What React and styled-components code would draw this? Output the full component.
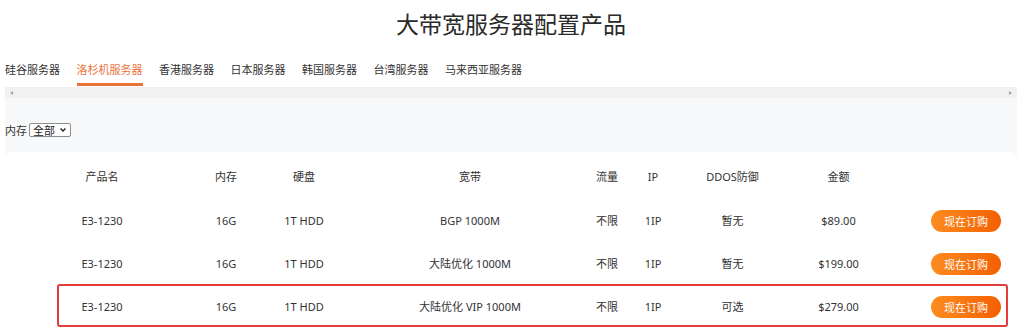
import React from "react";
import styled, { createGlobalStyle } from "styled-components";

const GlobalStyle = createGlobalStyle`
  html, body { margin: 0; padding: 0; background: #ffffff; }
  body {
    font-family: "Noto Sans", "Noto Sans CJK SC", sans-serif;
    color: #333333;
  }
`;

const Page = styled.div`
  padding: 0 7px 0 5px;
  width: 1012px;
`;

const Title = styled.h1`
  margin: 0;
  font-size: 23px;
  font-weight: 400;
  line-height: 46px;
  text-align: center;
  color: #2a2a2a;
  font-family: "Noto Sans CJK SC", sans-serif;
`;

const Tabs = styled.nav`
  display: flex;
  gap: 16.5px;
`;

const Tab = styled.div`
  font-size: 11px;
  line-height: 16px;
  padding: 15px 0 6px;
  border-bottom: 3px solid ${(p) => (p.$active ? "#e8733a" : "transparent")};
  color: ${(p) => (p.$active ? "#e8733a" : "#333333")};
  font-family: "Noto Sans CJK SC", sans-serif;
  white-space: nowrap;
`;

const ScrollTrack = styled.div`
  margin-top: 1px;
  height: 11px;
  background: #f1f1f1;
  display: flex;
  align-items: center;
  justify-content: space-between;
  padding: 0 5px;
`;

const Arrow = styled.span`
  width: 0;
  height: 0;
  border-top: 2.5px solid transparent;
  border-bottom: 2.5px solid transparent;
  ${(p) =>
    p.$dir === "left"
      ? "border-right: 3px solid #a3a3a3;"
      : "border-left: 3px solid #a3a3a3;"}
`;

const Panel = styled.div`
  background: #f7f8fa;
  padding-top: 24px;
  height: 235px;
  box-sizing: border-box;
`;

const Filter = styled.div`
  display: flex;
  align-items: center;
  gap: 2px;
  font-size: 11px;
  line-height: 16px;
  height: 16px;
  font-family: "Noto Sans CJK SC", sans-serif;
`;

const SelectWrap = styled.span`
  position: relative;
  display: inline-flex;
`;

const Select = styled.select`
  appearance: none;
  -webkit-appearance: none;
  font-size: 11px;
  line-height: 12px;
  height: 14px;
  width: 42px;
  padding: 0 0 0 3px;
  margin: 0;
  border: 1px solid #8d8d8d;
  border-radius: 2px;
  background: #fff;
  color: #222;
  font-family: "Noto Sans CJK SC", sans-serif;
  box-sizing: border-box;
`;

const Chevron = styled.svg`
  position: absolute;
  right: 5px;
  top: 5px;
  width: 6px;
  height: 4px;
  pointer-events: none;
`;

const Card = styled.div`
  margin-top: 14px;
  background: #ffffff;
  border-radius: 6px 6px 0 0;
  padding: 0 0 10px 7px;
`;

const Row = styled.div`
  position: relative;
  display: grid;
  grid-template-columns: 180px 68px 88px 244px 30px 62px 97px 115px 1fr;
  align-items: center;
  height: ${(p) => (p.$head ? "47px" : "43px")};
  padding-top: ${(p) => (p.$head ? "3px" : "0")};
  box-sizing: border-box;
  font-size: 11px;
  color: #333333;
  font-family: "Noto Sans", "Noto Sans CJK SC", sans-serif;

  ${(p) =>
    p.$highlight &&
    `
    &::after {
      content: "";
      position: absolute;
      left: 45px;
      right: 9px;
      top: -1px;
      bottom: 1px;
      border: 2px solid #e23c3c;
      border-radius: 3px;
      pointer-events: none;
    }
  `}
`;

const Cell = styled.div`
  text-align: center;
  white-space: nowrap;
  line-height: 16px;
`;

const ActionCell = styled.div`
  padding-left: 35px;
  display: flex;
`;

const BuyButton = styled.button`
  width: 70px;
  height: 22px;
  border: none;
  border-radius: 11px;
  background: linear-gradient(90deg, #fd8c20 0%, #f8740f 55%, #f35f04 100%);
  color: #ffffff;
  font-size: 11px;
  font-family: "Noto Sans CJK SC", sans-serif;
  padding: 0;
  cursor: pointer;
`;

const tabs = [
  "硅谷服务器",
  "洛杉机服务器",
  "香港服务器",
  "日本服务器",
  "韩国服务器",
  "台湾服务器",
  "马来西亚服务器",
];

const headers = ["产品名", "内存", "硬盘", "宽带", "流量", "IP", "DDOS防御", "金额"];

const rows = [
  { name: "E3-1230", mem: "16G", disk: "1T HDD", bw: "BGP 1000M", flow: "不限", ip: "1IP", ddos: "暂无", price: "$89.00" },
  { name: "E3-1230", mem: "16G", disk: "1T HDD", bw: "大陆优化 1000M", flow: "不限", ip: "1IP", ddos: "暂无", price: "$199.00" },
  { name: "E3-1230", mem: "16G", disk: "1T HDD", bw: "大陆优化 VIP 1000M", flow: "不限", ip: "1IP", ddos: "可选", price: "$279.00", highlight: true },
];

export default function App() {
  return (
    <>
      <GlobalStyle />
      <Page>
        <Title>大带宽服务器配置产品</Title>
        <Tabs>
          {tabs.map((t, i) => (
            <Tab key={t} $active={i === 1}>
              {t}
            </Tab>
          ))}
        </Tabs>
        <ScrollTrack>
          <Arrow $dir="left" />
          <Arrow $dir="right" />
        </ScrollTrack>
        <Panel>
          <Filter>
            <span>内存</span>
            <SelectWrap>
              <Select defaultValue="all">
                <option value="all">全部</option>
                <option value="16">16G</option>
                <option value="32">32G</option>
              </Select>
              <Chevron viewBox="0 0 6 4">
                <path d="M0.6 0.6 L3 3 L5.4 0.6" fill="none" stroke="#222" strokeWidth="1.4" />
              </Chevron>
            </SelectWrap>
          </Filter>
          <Card>
            <Row $head>
              {headers.map((h) => (
                <Cell key={h}>{h}</Cell>
              ))}
              <Cell />
            </Row>
            {rows.map((r, i) => (
              <Row key={i} $highlight={r.highlight}>
                <Cell>{r.name}</Cell>
                <Cell>{r.mem}</Cell>
                <Cell>{r.disk}</Cell>
                <Cell>{r.bw}</Cell>
                <Cell>{r.flow}</Cell>
                <Cell>{r.ip}</Cell>
                <Cell>{r.ddos}</Cell>
                <Cell>{r.price}</Cell>
                <ActionCell>
                  <BuyButton>现在订购</BuyButton>
                </ActionCell>
              </Row>
            ))}
          </Card>
        </Panel>
      </Page>
    </>
  );
}
